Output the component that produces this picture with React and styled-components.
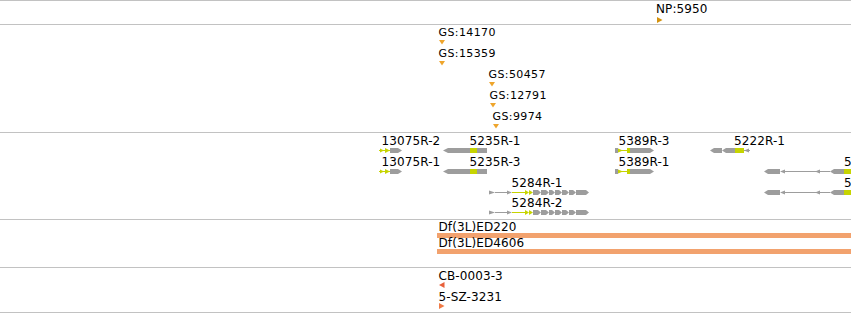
import React from 'react';
import styled, { createGlobalStyle } from 'styled-components';

const GRAY = '#9d9d9d';
const CDS = '#c6d400';

const Global = createGlobalStyle`
  html, body { margin: 0; padding: 0; background: #fff; }
  body { font-family: "DejaVu Sans", "Liberation Sans", sans-serif; }
`;

/* ---------- layout ---------- */
const Browser = styled.div`
  width: 851px;
  display: flex;
  flex-direction: column;
  border-bottom: 1px solid #c2c2c2;
`;

const Track = styled.section`
  height: ${(p) => p.$h}px;
  box-sizing: content-box;
  border-top: 1px solid #c2c2c2;
  padding-top: ${(p) => p.$pad}px;
  display: flex;
  flex-direction: column;
  gap: ${(p) => p.$gap}px;
  overflow: hidden;
  box-sizing: border-box;
`;

/* a row on the genome canvas: features sit at their genomic x position */
const Row = styled.div`
  position: relative;
  flex: none;
  height: ${(p) => p.$h}px;
`;

const Feature = styled.div`
  position: absolute;
  top: 0;
  left: ${(p) => p.$x}px;
  display: flex;
  flex-direction: column;
  align-items: flex-start;
  gap: ${(p) => p.$gap || 0}px;
`;

const Label = styled.span`
  margin-left: ${(p) => p.$dx}px;
  font-size: ${(p) => (p.$small ? 11 : 12)}px;
  letter-spacing: ${(p) => (p.$small ? 0.4 : 0.1)}px;
  line-height: ${(p) => p.$lh || 14}px;
  color: #000;
  white-space: nowrap;
`;

const Glyph = styled.svg`
  display: block;
  flex: none;
  overflow: visible;
`;

const Bar = styled.div`
  width: ${(p) => p.$w}px;
  height: 5px;
  background: #f2a26e;
`;

/* ---------- glyph drawings ---------- */
const pent = (a, b, tip = 4) =>
  `${a},0 ${b - tip},0 ${b},2.5 ${b - tip},5 ${a},5`;
const pentL = (a, b, tip = 4) =>
  `${a},2.5 ${a + tip},0 ${b},0 ${b},5 ${a + tip},5`;

const Marker = ({ kind, color }) => {
  if (kind === 'down')
    return (
      <Glyph width="6" height="5" viewBox="0 0 6 5">
        <polygon points="0,0 6,0 3,4.5" fill={color} />
      </Glyph>
    );
  if (kind === 'left')
    return (
      <Glyph width="6" height="6" viewBox="0 0 6 6">
        <polygon points="5.5,0 0,3 5.5,6" fill={color} />
      </Glyph>
    );
  return (
    <Glyph width="6" height="6" viewBox="0 0 6 6">
      <polygon points="0,0 5.5,3 0,6" fill={color} />
    </Glyph>
  );
};

const Gene13075 = () => (
  <>
    <rect x="0" y="2" width="11" height="1" fill={CDS} />
    <polygon points="1,0.5 5,2.5 1,4.5" fill={CDS} />
    <polygon points="6,0 11,2.5 6,5" fill={CDS} />
    <polygon points={pent(11, 23)} fill={GRAY} />
  </>
);

const Gene5235 = () => (
  <>
    <polygon points={pentL(0, 27, 5)} fill={GRAY} />
    <rect x="27" y="0" width="7" height="5" fill={CDS} />
    <rect x="34" y="0" width="10" height="5" fill={GRAY} />
  </>
);

const Gene5389 = () => (
  <>
    <rect x="0" y="0" width="3" height="5" fill={GRAY} />
    <polygon points="3,0.5 8,2.5 3,4.5" fill={CDS} />
    <rect x="3" y="2" width="9" height="1" fill={CDS} />
    <rect x="12" y="0" width="3" height="5" fill={CDS} />
    <polygon points={pent(15, 39)} fill={GRAY} />
  </>
);

const Gene5222 = () => (
  <>
    <polygon points={pentL(0, 12)} fill={GRAY} />
    <polygon points={pentL(12, 25)} fill={GRAY} />
    <rect x="25" y="0" width="9" height="5" fill={CDS} />
    <polygon points="34,2.5 39,0.5 39,4.5" fill={GRAY} />
    <rect x="34" y="2" width="6" height="1" fill={GRAY} />
  </>
);

const GeneRight = () => (
  <>
    <polygon points={pentL(0, 16)} fill={GRAY} />
    <polygon points="16,2.5 21,0.5 21,4.5" fill={GRAY} />
    <rect x="21" y="2" width="45" height="1" fill={GRAY} />
    <polygon points="51,2.5 56,0.5 56,4.5" fill={GRAY} />
    <polygon points={pentL(66, 80)} fill={GRAY} />
    <rect x="80" y="0" width="8" height="5" fill={CDS} />
  </>
);

const Gene5284 = () => (
  <>
    <polygon points="0,0.5 6,2.5 0,4.5" fill={GRAY} />
    <rect x="6" y="2" width="12" height="1" fill={GRAY} />
    <polygon points="18,0.5 23,2.5 18,4.5" fill={GRAY} />
    <rect x="23" y="2" width="13" height="1" fill={CDS} />
    <polygon points="36,0 40,2.5 36,5" fill={CDS} />
    <polygon points="40,0 44,2.5 40,5" fill={CDS} />
    {[
      [44, 52],
      [52, 60],
      [60, 66],
      [66, 73],
      [73, 80],
      [80, 87],
      [87, 100],
    ].map(([a, b]) => (
      <polygon key={a} points={pent(a, b, 3)} fill={GRAY} />
    ))}
  </>
);

const Gene = ({ G, w }) => (
  <Glyph width={w} height="5" viewBox={`0 0 ${w} 5`}>
    <G />
  </Glyph>
);

/* ---------- data ---------- */
const GS_COLOR = '#eea52c';

const gsRows = [
  { t: 'GS:14170', x: 439 },
  { t: 'GS:15359', x: 439 },
  { t: 'GS:50457', x: 489 },
  { t: 'GS:12791', x: 490 },
  { t: 'GS:9974', x: 493 },
];

const geneRows = [
  [
    { t: '13075R-2', x: 379, dx: 2.5, G: Gene13075, w: 23 },
    { t: '5235R-1', x: 443, dx: 26.5, G: Gene5235, w: 44 },
    { t: '5389R-3', x: 615, dx: 3.5, G: Gene5389, w: 39 },
    { t: '5222R-1', x: 710, dx: 24, G: Gene5222, w: 41 },
  ],
  [
    { t: '13075R-1', x: 379, dx: 2.5, G: Gene13075, w: 23 },
    { t: '5235R-3', x: 443, dx: 26.5, G: Gene5235, w: 44 },
    { t: '5389R-1', x: 615, dx: 3.5, G: Gene5389, w: 39 },
    { t: '5', x: 764, dx: 80, G: GeneRight, w: 88 },
  ],
  [
    { t: '5284R-1', x: 489, dx: 22.5, G: Gene5284, w: 100 },
    { t: '5', x: 764, dx: 80, G: GeneRight, w: 88 },
  ],
  [{ t: '5284R-2', x: 489, dx: 22.5, G: Gene5284, w: 100 }],
];

const dfRows = ['Df(3L)ED220', 'Df(3L)ED4606'];

const cbRows = [
  { t: 'CB-0003-3', kind: 'left', color: '#e8603a' },
  { t: '5-SZ-3231', kind: 'right', color: '#f07a46' },
];

export default function App() {
  return (
    <>
      <Global />
      <Browser>
        {/* NP track */}
        <Track $h={24} $pad={1} $gap={0}>
          <Row $h={22}>
            <Feature $x={657} $gap={1}>
              <Label $dx={-1}>NP:5950</Label>
              <Marker kind="right" color="#d4930f" />
            </Feature>
          </Row>
        </Track>

        {/* GS track */}
        <Track $h={108} $pad={1} $gap={2}>
          {gsRows.map((r) => (
            <Row key={r.t} $h={19}>
              <Feature $x={r.x}>
                <Label $small $dx={-0.5}>
                  {r.t}
                </Label>
                <Marker kind="down" color={GS_COLOR} />
              </Feature>
            </Row>
          ))}
        </Track>

        {/* Gene models track */}
        <Track $h={87} $pad={1} $gap={2}>
          {geneRows.map((row, i) => (
            <Row key={i} $h={i === 2 ? 18 : 19}>
              {row.map((g) => (
                <Feature key={g.t + g.x} $x={g.x}>
                  <Label $dx={g.dx}>{g.t}</Label>
                  <Gene G={g.G} w={g.w} />
                </Feature>
              ))}
            </Row>
          ))}
        </Track>

        {/* Deficiency track */}
        <Track $h={48} $pad={2} $gap={0}>
          {dfRows.map((t) => (
            <Row key={t} $h={16}>
              <Feature $x={437}>
                <Label $dx={1.5} $lh={11}>
                  {t}
                </Label>
                <Bar $w={414} />
              </Feature>
            </Row>
          ))}
        </Track>

        {/* Insertion track */}
        <Track $h={45} $pad={3} $gap={4}>
          {cbRows.map((r) => (
            <Row key={r.t} $h={17}>
              <Feature $x={439}>
                <Label $dx={-0.5} $lh={11}>
                  {r.t}
                </Label>
                <Marker kind={r.kind} color={r.color} />
              </Feature>
            </Row>
          ))}
        </Track>
      </Browser>
    </>
  );
}
